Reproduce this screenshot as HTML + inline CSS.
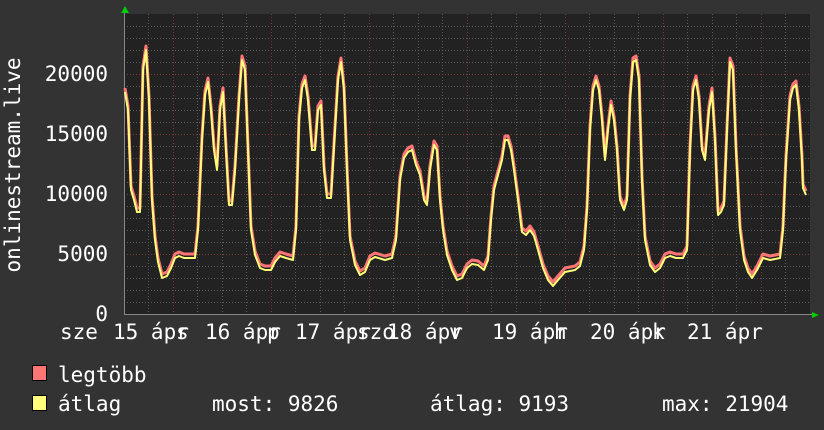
<!DOCTYPE html>
<html><head><meta charset="utf-8"><style>
html,body{margin:0;padding:0;background:#333333;}
svg{display:block}
text{font-family:"DejaVu Sans Mono","Liberation Mono",monospace;font-size:21px;fill:#ffffff;}
</style></head><body>
<svg width="824" height="430" viewBox="0 0 824 430" xmlns="http://www.w3.org/2000/svg">
<rect width="824" height="430" fill="#333333"/>
<rect x="124" y="14" width="686" height="300" fill="#222222"/>
<g stroke="#5a5a5a" stroke-width="1" stroke-dasharray="1,2">
<path d="M124 302.5H810M124 290.5H810M124 278.5H810M124 266.5H810M124 242.5H810M124 230.5H810M124 218.5H810M124 206.5H810M124 182.5H810M124 170.5H810M124 158.5H810M124 146.5H810M124 122.5H810M124 110.5H810M124 98.5H810M124 86.5H810M124 62.5H810M124 50.5H810M124 38.5H810M124 26.5H810"/>
<path d="M148.5 14V314M197.5 14V314M222.5 14V314M246.5 14V314M295.5 14V314M320.5 14V314M344.5 14V314M393.5 14V314M418.5 14V314M442.5 14V314M491.5 14V314M516.5 14V314M540.5 14V314M589.5 14V314M614.5 14V314M638.5 14V314M687.5 14V314M712.5 14V314M736.5 14V314M785.5 14V314"/>
</g>
<g stroke="#7a3a3a" stroke-width="1" stroke-dasharray="1,2">
<path d="M124 254.5H810M124 194.5H810M124 134.5H810M124 74.5H810"/>
<path d="M173.5 14V314M271.5 14V314M369.5 14V314M467.5 14V314M565.5 14V314M663.5 14V314M761.5 14V314"/>
</g>
<path d="M124 314.5H814M124.5 10V314" stroke="#888" stroke-width="1"/>
<polygon points="121,13 125,6 129,13" fill="#00cc00"/>
<polygon points="812,312 819,315 812,318" fill="#00cc00"/>
<g fill="none" stroke-linejoin="round">
<polyline transform="translate(0,-4)" stroke="#ff7575" stroke-width="3" points="125,92 128,110 131,190 134,200 137,212 140,212 143,70 146,50 149,100 152,200 155,240 158,262 162,278 167,276 171,268 175,258 179,256 184,258 195,258 198,230 202,140 205,95 208,82 211,110 214,150 217,170 220,110 223,92 226,150 229,205 232,205 235,170 239,100 242,60 245,70 248,150 251,230 255,255 260,268 265,270 271,270 275,262 280,256 286,258 293,260 296,230 299,120 302,88 305,80 308,100 312,150 315,150 318,110 321,105 324,170 327,198 331,198 335,130 338,80 341,62 344,90 347,170 350,240 355,265 360,275 365,272 370,260 375,257 385,260 392,258 396,240 400,180 404,158 408,152 412,150 416,165 420,175 424,200 427,205 430,170 434,145 437,150 440,200 443,230 447,255 452,270 457,280 462,278 467,268 472,264 478,265 484,270 488,260 491,220 494,190 498,175 502,160 505,140 508,140 511,150 514,170 518,200 522,232 526,235 530,230 534,236 538,250 543,268 548,280 553,286 558,280 565,272 575,270 580,266 584,250 587,210 590,130 593,90 596,80 599,90 602,120 605,160 608,130 611,105 614,120 617,150 620,200 624,210 627,200 630,100 633,62 636,60 639,80 642,180 645,240 650,265 655,272 660,268 665,258 670,256 676,258 683,258 687,250 690,150 693,90 696,80 699,100 702,150 705,160 709,110 712,92 715,140 718,215 721,212 724,205 727,130 730,62 733,70 736,150 740,230 744,260 748,272 752,278 757,270 763,258 770,260 780,258 783,230 786,160 790,100 793,88 796,85 799,110 802,160 803,188 806,195"/>
<polyline stroke="#ffff7a" stroke-width="2" points="125,92 128,110 131,190 134,200 137,212 140,212 143,70 146,50 149,100 152,200 155,240 158,262 162,278 167,276 171,268 175,258 179,256 184,258 195,258 198,230 202,140 205,95 208,82 211,110 214,150 217,170 220,110 223,92 226,150 229,205 232,205 235,170 239,100 242,60 245,70 248,150 251,230 255,255 260,268 265,270 271,270 275,262 280,256 286,258 293,260 296,230 299,120 302,88 305,80 308,100 312,150 315,150 318,110 321,105 324,170 327,198 331,198 335,130 338,80 341,62 344,90 347,170 350,240 355,265 360,275 365,272 370,260 375,257 385,260 392,258 396,240 400,180 404,158 408,152 412,150 416,165 420,175 424,200 427,205 430,170 434,145 437,150 440,200 443,230 447,255 452,270 457,280 462,278 467,268 472,264 478,265 484,270 488,260 491,220 494,190 498,175 502,160 505,140 508,140 511,150 514,170 518,200 522,232 526,235 530,230 534,236 538,250 543,268 548,280 553,286 558,280 565,272 575,270 580,266 584,250 587,210 590,130 593,90 596,80 599,90 602,120 605,160 608,130 611,105 614,120 617,150 620,200 624,210 627,200 630,100 633,62 636,60 639,80 642,180 645,240 650,265 655,272 660,268 665,258 670,256 676,258 683,258 687,250 690,150 693,90 696,80 699,100 702,150 705,160 709,110 712,92 715,140 718,215 721,212 724,205 727,130 730,62 733,70 736,150 740,230 744,260 748,272 752,278 757,270 763,258 770,260 780,258 783,230 786,160 790,100 793,88 796,85 799,110 802,160 803,188 806,195"/>
</g>
<g text-anchor="end">
<text x="108" y="81">20000</text>
<text x="108" y="141">15000</text>
<text x="108" y="201">10000</text>
<text x="108" y="261">5000</text>
<text x="108" y="321">0</text>
</g>
<text transform="translate(20,165) rotate(-90)" text-anchor="middle">onlinestream.live</text>
<text x="60" y="339">sze</text>
<text x="113" y="339">15 ápr</text><text x="176" y="339">s</text>
<text x="205" y="339">16 ápr</text><text x="267" y="339">p</text>
<text x="295" y="339">17 ápr</text><text x="357" y="339">szo</text>
<text x="387" y="339">18 ápr</text><text x="449" y="339">v</text>
<text x="492" y="339">19 ápr</text><text x="554" y="339">h</text>
<text x="590" y="339">20 ápr</text><text x="652" y="339">k</text>
<text x="687" y="339">21 ápr</text>
<rect x="32.5" y="365.5" width="14" height="15" fill="#ff7575" stroke="#000"/>
<rect x="32.5" y="395.5" width="14" height="15" fill="#ffff7a" stroke="#000"/>
<text x="58" y="382">legtöbb</text>
<text x="58" y="411">átlag</text>
<text x="212" y="411">most: 9826</text>
<text x="430" y="411">átlag: 9193</text>
<text x="662" y="411">max: 21904</text>
</svg>
</body></html>
